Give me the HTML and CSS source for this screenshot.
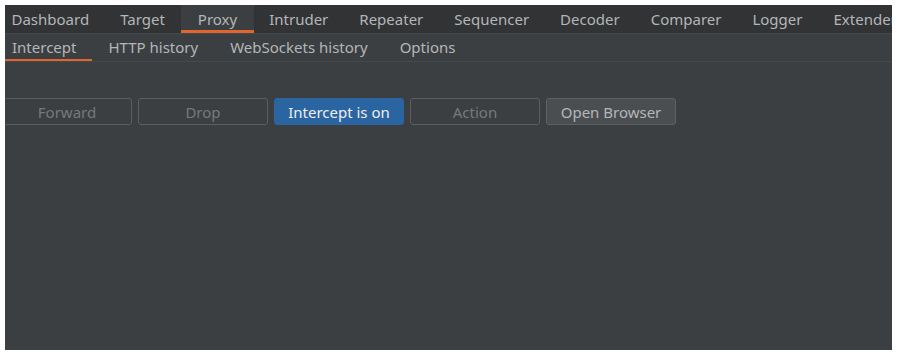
FILE: index.html
```html
<!DOCTYPE html>
<html>
<head>
  <meta charset="utf-8">
  <title>Proxy - Intercept</title>
  <link rel="stylesheet" href="styles.css">
</head>
<body>
<div id="window">
  <div class="tabBar">
    <div class="tab">Dashboard</div>
    <div class="tab">Target</div>
    <div class="tab selected">Proxy</div>
    <div class="tab">Intruder</div>
    <div class="tab">Repeater</div>
    <div class="tab">Sequencer</div>
    <div class="tab">Decoder</div>
    <div class="tab">Comparer</div>
    <div class="tab">Logger</div>
    <div class="tab">Extender</div>
  </div>
  <div class="subTabBar">
    <div class="subTab selected">Intercept</div>
    <div class="subTab">HTTP history</div>
    <div class="subTab">WebSockets history</div>
    <div class="subTab">Options</div>
  </div>
  <div class="toolbar">
    <button class="btn" disabled>Forward</button>
    <button class="btn" disabled>Drop</button>
    <button class="btn primary">Intercept is on</button>
    <button class="btn" disabled>Action</button>
    <button class="btn active">Open Browser</button>
  </div>
</div>
</body>
</html>
```

FILE: styles.css
```css
* { margin: 0; padding: 0; box-sizing: border-box; }
body { background: #ffffff; padding: 5px 5px 6px 5px; font-family: "Noto Sans", "DejaVu Sans", sans-serif; font-size: 15px; color: #b4b6b8; }
#window { background: #3c3f41; height: 345px; overflow: hidden; }
.tabBar { display: flex; height: 29px; background: #313335; border-bottom: 1px solid #46494b; white-space: nowrap; margin-left: -9px; }
.tab { padding: 0 15.5px; line-height: 28px; height: 28px; }
.tab:nth-child(2) { padding-right: 16.5px; }
.tab.selected { background: #3c3f41; box-shadow: inset 0 -3px 0 #e0662d; padding: 0 16.5px; }
.subTabBar { display: flex; height: 28px; border-bottom: 1px solid #46494b; white-space: nowrap; margin-left: -9px; }
.subTab { padding: 0 16px; line-height: 26px; height: 27px; }
.subTab.selected { box-shadow: inset 0 -2px 0 #e0662d; }
.toolbar { display: flex; gap: 6px; padding-top: 36px; margin-left: -3px; }
.btn { width: 130px; height: 27px; font-family: inherit; font-size: 15px; color: #b4b6b8; background: #3c3f41; border: 1px solid #5b5e61; border-radius: 3px; }
.btn:disabled { color: #76797b; }
.btn.primary { background: #2a65a1; border-color: #2a65a1; color: #eeeeee; }
.btn.active { background: #4b4e50; border-color: #5e6163; }
```
